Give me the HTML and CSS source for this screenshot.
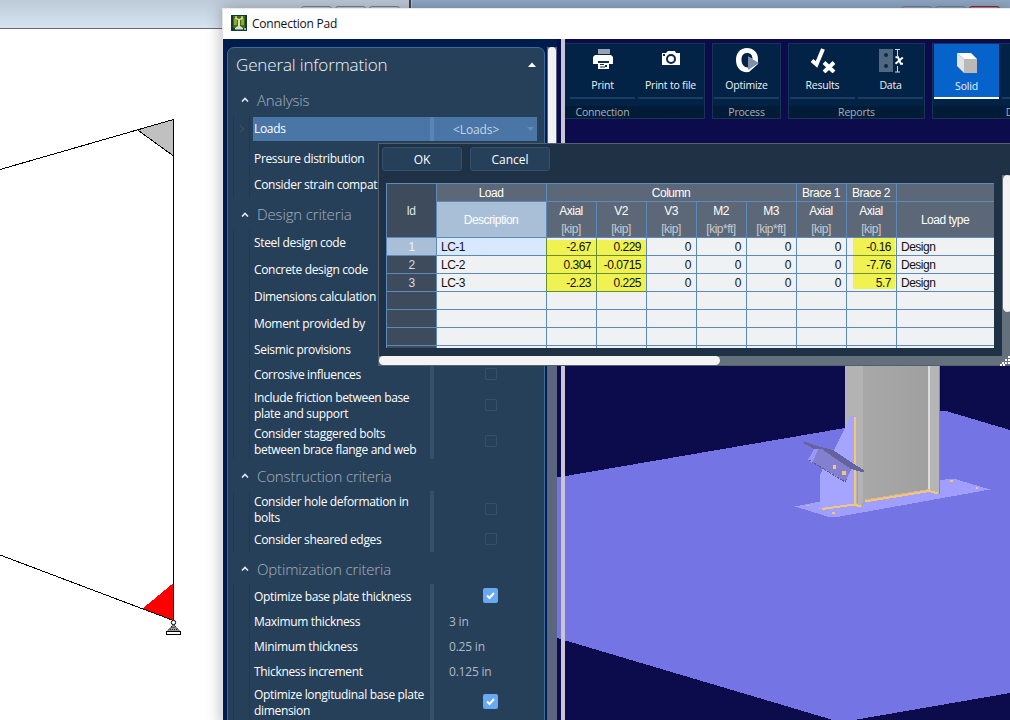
FILE: index.html
```html
<!DOCTYPE html>
<html lang="en">
<head>
<meta charset="utf-8">
<title>Connection Pad</title>
<link rel="stylesheet" href="styles.css">
</head>
<body>
<div class="desktop">
  <div class="back-top"><div class="back-left"><i></i><i></i><i></i></div><div class="back-right"><i></i><i></i><i class="close"></i></div></div>
  <svg class="frame-drawing" width="222" height="691" viewBox="0 29 222 691" shape-rendering="crispEdges">
    <path d="M173.500 120V156L137 130Z" fill="#c0c0c0"/>
    <path d="M173.500 583V621L142 609Z" fill="#f00"/>
    <path d="M0 169.500L173.500 119.500V621M0 555L173.500 620.500M137 129.500L173.500 156" fill="none" stroke="#000"/>
    <g shape-rendering="auto"><path d="M173.500 624.500L180 631.500H167Z" fill="#999" stroke="#000" stroke-dasharray="1.500 .7"/><path d="M170 629.500H177M171.500 627.500H175.500" stroke="#222" stroke-dasharray="1 1"/><circle cx="173.500" cy="622.500" r="2.200" fill="#fff" stroke="#000"/></g>
    <path d="M166.500 631.500H180.500V634.500H166.500Z" fill="#fff" stroke="#000"/>
  </svg>

  <div class="window">
    <div class="titlebar">
      <svg width="16" height="16" viewBox="0 0 16 16"><rect width="16" height="16" fill="#0c3b35"/><rect x="2" y="1" width="12" height="12" fill="#3f6c22"/><path d="M3 4h3v6H3zM10 4h3v6h-3z" fill="#93a81c"/><path d="M3.500 3.500L7 5v6l-3 2v1.500h8V13l-3-2V5l3.500-1.500-1-1L8 4 4.500 2.500z" fill="#d9e2c4"/><path d="M4 1h2v2H4zM10 1h2v2h-2z" fill="#c8c021"/><path d="M13 13h2v2h-2z" fill="#9bb"/></svg>
      <span>Connection Pad</span>
    </div>
    <div class="workspace">
      <svg class="scene" width="453" height="681" viewBox="557 39 453 681" shape-rendering="crispEdges">
        <defs><linearGradient id="web"><stop offset="0" stop-color="#a8a8a8"/><stop offset="1" stop-color="#a0a0a0"/></linearGradient></defs>
        <path d="M557 39H1010V720H557Z" fill="#0c0b4b"/>
        <path d="M557 477.500L845 428L942 411H946L1010 430V693L854 720H833L557 638Z" fill="#7574e4"/>
        <path d="M795 506.500L820 501.500L951 478.500L955 479L990 489.500L837 517H829Z" fill="#a09fff"/>
        <path d="M845 360H863V507H856L845 470Z" fill="#b3b3b3"/>
        <path d="M863 360H929V491L863 502Z" fill="url(#web)"/>
        <path d="M928 360H930V491H928Z" fill="#dcdcdc"/>
        <path d="M930 360H940V494L930 491Z" fill="#b5b5b5"/><path d="M939 360H940V494H939Z" fill="#888"/>
        <path d="M845 428L850.500 416H856V504L820 509V475L824 466L834 450Z" fill="#a5a4ff"/>
        <path d="M822 509L854 504.500L861 506.500M865 501.500L929 491L938 493.500" fill="none" stroke="#f5c57b" stroke-width="2"/>
        <path d="M855 417V504" stroke="#f5c57b" stroke-width="2"/>
        <path d="M857 466V503M862.500 503V506" stroke="#a1a1a1"/>
        <path d="M865 500L929 489.500" stroke="#d2b68c"/>
        <path d="M816 446L833 452L852 468L845 481.500L808 459Z" fill="#8281cf"/>
        <path d="M816 446L819 448L812 463L808 460Z" fill="#9998fa"/>
        <path d="M801 441.500L806 442L817 446L833 450L851 462L865 471L862 472L851 469L836 459L822 449H814Z" fill="#64639f"/>
        <path d="M809 460L845 482L847 479" fill="none" stroke="#5b5a99" stroke-dasharray="2 1"/>
        <path d="M833 465h3v4h-3zM842 471h4v4h-4zM832 512h3v2h-3zM807 505h2v1h-2zM819 508h1v1h-1zM950 480h3v2h-3zM976 487h2v2h-2z" fill="#f5c57b"/>
      </svg>

      <div class="sidebar">
        <div class="panel">
          <div class="panel-title"><span>General information</span><svg width="8" height="5" viewBox="0 0 8 5"><path d="M0 5L4 .5L8 5Z" fill="#fff"/></svg></div>

          <div class="section h32"><svg width="8" height="5" viewBox="0 0 8 5"><path d="M1 4.500L4 1.500L7 4.500" /></svg><span>Analysis</span></div>
          <div class="rows">
            <div class="row h29 selected"><b>Loads</b><em>&lt;Loads&gt;</em><svg class="arrow" width="7" height="4" viewBox="0 0 7 4"><path d="M0 0H7L3.500 4Z" fill="#638cba"/></svg></div>
            <div class="row h28"><b>Pressure distribution</b></div>
            <div class="row h26"><b>Consider strain compatibility</b></div>
          </div>

          <div class="section h31"><svg width="8" height="5" viewBox="0 0 8 5"><path d="M1 4.500L4 1.500L7 4.500" /></svg><span>Design criteria</span></div>
          <div class="rows">
            <div class="row h27"><b>Steel design code</b></div>
            <div class="row h27"><b>Concrete design code</b></div>
            <div class="row h27"><b>Dimensions calculation</b></div>
            <div class="row h27"><b>Moment provided by</b></div>
            <div class="row h25"><b>Seismic provisions</b></div>
            <div class="row h25"><b>Corrosive influences</b><u></u></div>
            <div class="row h37"><b>Include friction between base<br>plate and support</b><u></u></div>
            <div class="row h35"><b>Consider staggered bolts<br>between brace flange and web</b><u></u></div>
          </div>

          <div class="section h32"><svg width="8" height="5" viewBox="0 0 8 5"><path d="M1 4.500L4 1.500L7 4.500" /></svg><span>Construction criteria</span></div>
          <div class="rows">
            <div class="row h36"><b>Consider hole deformation in<br>bolts</b><u></u></div>
            <div class="row h25"><b>Consider sheared edges</b><u></u></div>
          </div>

          <div class="section h32"><svg width="8" height="5" viewBox="0 0 8 5"><path d="M1 4.500L4 1.500L7 4.500" /></svg><span>Optimization criteria</span></div>
          <div class="rows">
            <div class="row h25"><b>Optimize base plate thickness</b><u class="on"><svg width="15" height="15" viewBox="0 0 15 15"><path d="M4 7.500L6.500 10L11 5"/></svg></u></div>
            <div class="row h25"><b>Maximum thickness</b><em>3 in</em></div>
            <div class="row h25"><b>Minimum thickness</b><em>0.25 in</em></div>
            <div class="row h25"><b>Thickness increment</b><em>0.125 in</em></div>
            <div class="row h37"><b>Optimize longitudinal base plate<br>dimension</b><u class="on"><svg width="15" height="15" viewBox="0 0 15 15"><path d="M4 7.500L6.500 10L11 5"/></svg></u></div>
          </div>
        </div>
        <div class="scroll-track"><div class="scroll-thumb"></div></div>
      </div>
      <div class="splitter"></div>
      <div class="ribbon">
        <div class="group print">
          <div class="tools">
            <div class="tool"><svg width="20" height="20" viewBox="0 0 20 20"><path d="M5 0H17V5H5Z" fill="#97a3b3"/><path d="M2 6H18L20 8V15H16V20H5V15H0V8Z" fill="#fff"/><path d="M5 12H16V14H5ZM7 15H11V16H7ZM12 16H14V18H12ZM7 17.500H12V18.500H7Z" fill="#12304d"/></svg><span>Print</span></div>
            <div class="tool"><svg width="20" height="20" viewBox="0 0 20 20"><path d="M1 4H5L7 2H14L15 4H19V16H1Z" fill="#fff"/><circle cx="10" cy="10" r="4" fill="none" stroke="#0a2745" stroke-width="2"/><path d="M2 5H4V7H2Z" fill="#0a2745"/></svg><span>Print to file</span></div>
          </div>
          <div class="caption">Connection</div>
        </div>
        <div class="group process">
          <div class="tools"><div class="tool"><svg class="tall" width="24" height="26" viewBox="0 0 24 26"><path fill-rule="evenodd" d="M12 1C18 1 23 5 23 12V17L14 25C6 26 1 21 1 13C1 6 5 1 12 1ZM12 6C8 6 6.500 9 6.500 13C6.500 17 9 20.500 13 20.500V9.500L17.500 12C17.500 8 15.500 6 12 6Z" fill="#fff"/><path d="M13 9.500L24 16L13 23Z" fill="#7f90a8"/></svg><span>Optimize</span></div></div>
          <div class="caption">Process</div>
        </div>
        <div class="group reports">
          <div class="tools">
            <div class="tool"><svg class="tall" width="26" height="26" viewBox="0 0 26 26"><path d="M2 13.500L6.500 17.500L13 2" fill="none" stroke="#fff" stroke-width="4"/><path d="M14 15.500L24 25M24 15.500L14 25" stroke="#fff" stroke-width="4"/></svg><span>Results</span></div>
            <div class="tool"><svg class="tall" width="26" height="26" viewBox="0 0 26 26"><path d="M1 2H15V25H1Z" fill="#506780"/><circle cx="8" cy="8" r="2" fill="#0a2745"/><circle cx="8" cy="19" r="2" fill="#0a2745"/><path d="M17 2.500H22M19.500 3V9M19.500 19V25M17 25H22" stroke="#cfd8e2"/><path d="M17.500 10.200H20L22.800 16.800H25M24.800 10.500L17.500 16.800" fill="none" stroke="#fff" stroke-width="2"/></svg><span>Data</span></div>
          </div>
          <div class="caption">Reports</div>
        </div>
        <div class="group display">
          <div class="tools">
            <div class="tool active"><svg width="20" height="20" viewBox="0 0 20 20"><path d="M0 0H14L20 6H7Z" fill="#fff"/><path d="M0 0L7 6V20L0 13Z" fill="#e4e4e4"/><path d="M7 6H20V20H7Z" fill="#b9b9b9"/></svg><span>Solid</span></div>
            <div class="tool"></div>
          </div>
          <div class="caption">D</div>
        </div>
      </div>
    </div>
  </div>

  <div class="popup">
    <div class="buttons"><div class="btn">OK</div><div class="btn">Cancel</div></div>
    <div class="grid">
      <div class="id head">Id</div><div class="head">Load</div><div class="head span5">Column</div><div class="head">Brace 1</div><div class="head">Brace 2</div><div class="head"></div>
      <div class="head desc">Description</div>
      <div class="head sub">Axial<small>[kip]</small></div><div class="head sub">V2<small>[kip]</small></div><div class="head sub">V3<small>[kip]</small></div><div class="head sub">M2<small>[kip*ft]</small></div><div class="head sub">M3<small>[kip*ft]</small></div><div class="head sub">Axial<small>[kip]</small></div><div class="head sub">Axial<small>[kip]</small></div><div class="head">Load type</div>
      <div class="num cur">1</div><div class="name cur">LC-1</div><div class="hl first">-2.67</div><div class="hl first">0.229</div><div>0</div><div>0</div><div>0</div><div>0</div><div class="mark">-0.16</div><div class="name">Design</div>
      <div class="num">2</div><div class="name">LC-2</div><div class="hl">0.304</div><div class="hl">-0.0715</div><div>0</div><div>0</div><div>0</div><div>0</div><div class="mark in">-7.76</div><div class="name">Design</div>
      <div class="num">3</div><div class="name">LC-3</div><div class="hl">-2.23</div><div class="hl">0.225</div><div>0</div><div>0</div><div>0</div><div>0</div><div class="mark in last">5.7</div><div class="name">Design</div>
      <div class="num"></div><div></div><div class="under"></div><div class="under"></div><div></div><div></div><div></div><div></div><div></div><div></div>
      <div class="num"></div><div></div><div></div><div></div><div></div><div></div><div></div><div></div><div></div><div></div>
      <div class="num"></div><div></div><div></div><div></div><div></div><div></div><div></div><div></div><div></div><div></div>
      <div class="num"></div><div></div><div></div><div></div><div></div><div></div><div></div><div></div><div></div><div></div>
    </div>
    <div class="vtrack"><div class="vthumb"></div></div>
    <div class="htrack"><div class="hthumb"></div><svg width="10" height="10" viewBox="0 0 10 10" shape-rendering="crispEdges"><path d="M8 0h2v2H8zM5 3h2v2H5zM8 3h2v2H8zM2 6h2v2H2zM5 6h2v2H5zM8 6h2v2H8zM0 8h2v2H0zM3 8h2v2H3z" fill="#fff"/></svg></div>
  </div>
</div>
</body>
</html>
```
FILE: styles.css
```css
* { box-sizing: border-box; }
body { margin: 0; font-family: "Open Sans", "Noto Sans", sans-serif; font-size: 12px; }
.desktop { position: relative; width: 1010px; height: 720px; overflow: hidden; background: #fff; }
.back-top { display: flex; height: 29px; }
.back-left, .back-right { display: flex; gap: 3px; justify-content: flex-end; align-items: flex-start; }
.back-left { width: 411px; padding: 6px 9px 0 0; background: linear-gradient(#bdcad8, #d6e4f2); border-bottom: 1px solid #6e6a70; border-right: 2px solid #444; }
.back-right { flex: 1; padding: 6px 10px 0 0; background: #92abc8; border-left: 1px solid #b7cde4; }
.back-top i { width: 31px; height: 14px; border: 1px solid #7c8691; border-radius: 3px; }
.back-top .close { border-color: #7c3038; background: #b98a90; }
.frame-drawing { display: block; }

.window { position: absolute; left: 222px; top: 8px; width: 790px; height: 720px; border-left: 1px solid #dfe3e8; border-top: 1px solid #e7eaee; box-shadow: 0 0 15px rgba(0,0,0,.3); background: #001c4d; }
.titlebar { display: flex; align-items: center; gap: 5px; height: 30px; padding: 0 0 2px 8px; background: #fff; color: #111; font-size: 12px; letter-spacing: -.22px; }
.workspace { position: relative; display: flex; height: 681px; }
.scene { position: absolute; left: 334px; top: 0; }
.sidebar { display: flex; flex: none; width: 338px; padding: 8px 0 0 4px; }
.panel { flex: none; width: 318px; height: 690px; border: 1px solid #3a6ca0; border-radius: 7px; background: #27405a; color: #fff; }
.panel-title { display: flex; justify-content: space-between; align-items: center; height: 35px; padding: 0 8px 2px 8px; font-size: 17px; font-weight: 300; letter-spacing: -.14px; color: #f1f4f8; }
.section { display: flex; align-items: center; gap: 8px; padding: 1px 0 0 13px; font-size: 15px; font-weight: 300; letter-spacing: -.14px; color: #a6b1be; }
.section path { fill: none; stroke: #e2e8ee; stroke-width: 1.600; }
.rows { margin-left: 5px; border-left: 1px solid #21384f; }
.row { position: relative; display: flex; align-items: center; border-left: 1px solid #21384f; margin-left: 15px; padding-left: 4px; background: linear-gradient(90deg, transparent 180px, #34506c 180px, #34506c 184px, transparent 184px); }
.row b { width: 190px; font-weight: 400; font-size: 12px; line-height: 16px; white-space: nowrap; letter-spacing: -.33px; }
.row em { font-style: normal; color: #aebac7; letter-spacing: -.2px; margin-left: 5px; }
.row u { width: 12px; height: 12px; margin-left: 41px; margin-bottom: 2px; border: 1px solid #34506c; border-radius: 1px; }
.row u.on { width: 15px; height: 15px; margin-left: 39px; border: 0; background: #68a9f2; border-radius: 2px; }
.on svg { display: block; }
.on path { fill: none; stroke: #fff; stroke-width: 2; }
.selected { background: linear-gradient(90deg, transparent 3px, #4976a7 3px, #4976a7 180px, #5a84b1 180px, #5a84b1 184px, #4976a7 184px, #4976a7 287px, transparent 287px) 0 2px / 100% 24px no-repeat; }
.selected em { margin-left: 9px; color: #c6d5e6; letter-spacing: -.1px; }
.selected .arrow { margin-left: 28px; }
.selected::before { content: ""; position: absolute; left: -13px; top: 11px; width: 5px; height: 5px; border: solid #3b536c; border-width: 1px 1px 0 0; transform: rotate(45deg); }
.h25 { height: 25px; } .h26 { height: 26px; } .h27 { height: 27px; } .h28 { height: 28px; padding-top: 2px; } .h29 { height: 29px; padding-bottom: 1px; }
.h31 { height: 31px; } .h32 { height: 32px; } .h35 { height: 35px; } .h36 { height: 36px; padding-top: 2px; } .h37 { height: 37px; }
.scroll-track { flex: none; width: 10px; margin-left: 2px; background: #5a6680; }
.scroll-thumb { height: 190px; margin: 0 1px; border-radius: 5px 5px 0 0; background: #f2f2f4; }
.splitter { position: relative; flex: none; width: 4px; background: #c8c5d6; }

.ribbon { position: relative; flex: none; display: flex; align-items: flex-start; gap: 7px; padding-top: 4px; }
.group { height: 76px; border: 1px solid #173356; background: #022345; }
.print { width: 140px; border-left: 0; }
.process { width: 69px; }
.reports { width: 137px; }
.display { width: 90px; overflow: hidden; }
.tools { display: flex; gap: 3px; height: 62px; padding: 0 1px; }
.print .tools { padding-left: 5px; }
.tool { flex: 0 0 65px; height: 55px; display: flex; flex-direction: column; align-items: center; border-bottom: 2px solid #1b3d60; padding-top: 5px; color: #eef2f6; font-size: 10.500px; letter-spacing: -.2px; white-space: nowrap; }
.tool svg { margin-bottom: 9px; }
.tool .tall { margin: -2px 0 5px; }
.tool span { line-height: 15px; }
.tool.active { border-color: #fff; background: #0563cb; padding-top: 9px; }
.tool.active svg { margin-bottom: 6px; }
.caption { height: 12px; background: #021c37; color: #a4b0bd; font-size: 10.500px; line-height: 13px; letter-spacing: -.2px; text-align: center; }
.print .caption { padding-right: 64px; }
.display .caption { padding-left: 65px; }

.popup { position: absolute; left: 378px; top: 143px; width: 640px; height: 223px; border: 1px solid #55606c; background: #1f3145; }
.buttons { display: flex; gap: 8px; padding: 3px; }
.btn { width: 80px; height: 24px; border: 1px solid #32506f; border-radius: 3px; background: #27405a; color: #fff; text-align: center; line-height: 23px; }
.grid { display: grid; width: 608px; height: 165px; margin: 9px 0 0 7px; overflow: hidden; grid-template-columns: 50px 110px repeat(7, 50px) 98px; grid-template-rows: 18px 36px repeat(7, 18px); font-family: "Liberation Sans", Arial, sans-serif; font-size: 12px; letter-spacing: -.5px; line-height: 18px; }
.grid > div { border: solid #5b8abb; border-width: 1px 0 0 1px; background: #eff1f3; color: #111; text-align: right; padding-right: 5px; white-space: nowrap; }
.grid > .head { display: flex; flex-direction: column; align-items: center; justify-content: center; background: #5c6877; color: #fff; padding: 0 1px 0 0; line-height: 18px; }
.grid > .sub { justify-content: flex-start; }
.head small { font-size: 12px; color: #c4cad1; }
.grid > .span5 { grid-column: span 5; }
.grid > .id { grid-row: span 2; background: #3d4b5d; color: #dfe4e9; }
.grid > .desc { background: #a9bfd8; }
.grid > .num { background: #3d4b5d; color: #d5dbe2; text-align: center; padding: 0; }
.grid > .num.cur { background: #a9bfd8; color: #eef3f9; }
.grid > .name { text-align: left; padding: 0 0 0 4px; }
.grid > .name.cur { background: #d8e9ff; }
.grid > .hl { background: #f0f252; border-color: #658f32; }
.grid > .hl.first { border-top-color: #5b8abb; background: linear-gradient(#eff1f3 2px, #f0f252 2px); }
.grid > .under { border-top-color: #658f32; }
.grid > .mark { background: linear-gradient(90deg, #eff1f3 6px, #f0f252 6px, #f0f252 48px, #eff1f3 48px); }
.grid > .mark.in { border-image: linear-gradient(90deg, #5b8abb 7px, #758f32 7px, #758f32 49px, #5b8abb 49px) 1; border-width: 1px 0 0 1px; }
.grid > .mark.last { box-shadow: inset 0 -2px #eff1f3; }
.vtrack { position: absolute; left: 623px; top: 31px; width: 10px; height: 181px; padding-left: 1px; background: #64707c; }
.vthumb { width: 9px; height: 137px; border-radius: 5px; background: #f2f2f3; }
.htrack { position: absolute; left: 0; top: 212px; width: 631px; height: 9px; background: #64707c; display: flex; justify-content: space-between; }
.hthumb { width: 341px; height: 9px; border-radius: 5px; background: #f4f4f4; }
```
